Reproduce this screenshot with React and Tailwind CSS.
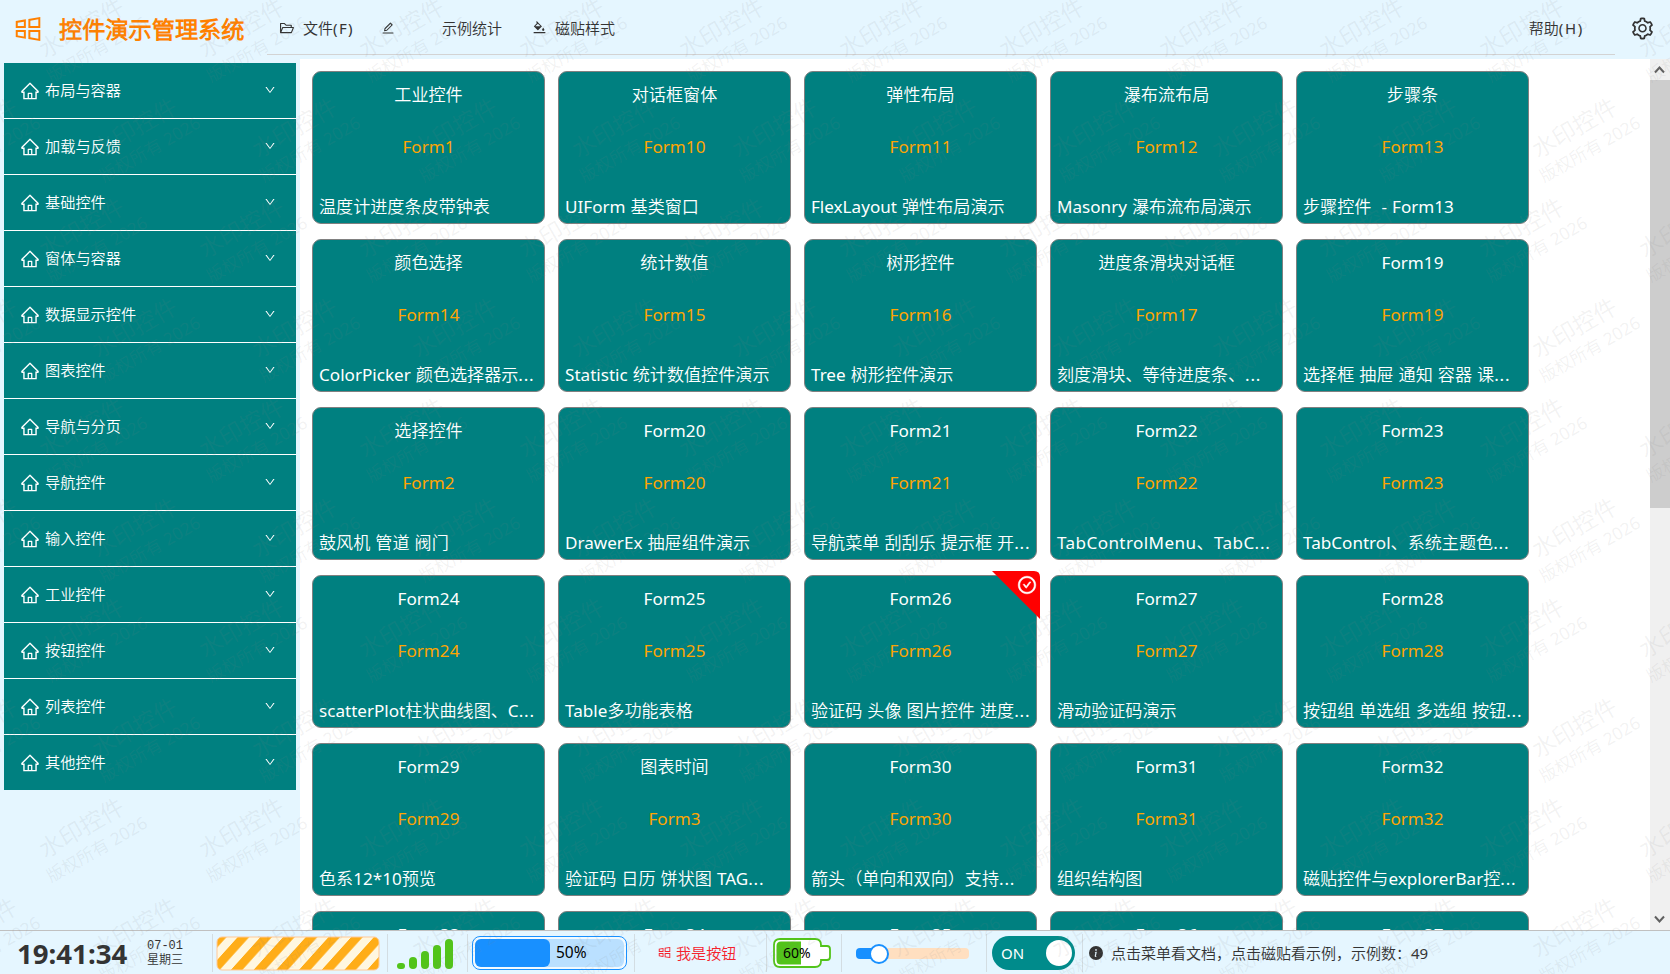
import {
  AiOutlineBgColors,
  AiOutlineCheckCircle,
  AiOutlineDown,
  AiOutlineEdit,
  AiOutlineFolderOpen,
  AiOutlineHome,
  AiOutlineSetting,
  AiOutlineWindows,
} from "react-icons/ai";
import { BsInfoCircleFill } from "react-icons/bs";

const MENU_ITEMS = [
  "布局与容器",
  "加载与反馈",
  "基础控件",
  "窗体与容器",
  "数据显示控件",
  "图表控件",
  "导航与分页",
  "导航控件",
  "输入控件",
  "工业控件",
  "按钮控件",
  "列表控件",
  "其他控件",
];

const TILES = [
  { title: "工业控件", form: "Form1", desc: "温度计进度条皮带钟表" },
  { title: "对话框窗体", form: "Form10", desc: "UIForm 基类窗口" },
  { title: "弹性布局", form: "Form11", desc: "FlexLayout 弹性布局演示" },
  { title: "瀑布流布局", form: "Form12", desc: "Masonry 瀑布流布局演示" },
  { title: "步骤条", form: "Form13", desc: "步骤控件  - Form13" },
  { title: "颜色选择", form: "Form14", desc: "ColorPicker 颜色选择器示..." },
  { title: "统计数值", form: "Form15", desc: "Statistic 统计数值控件演示" },
  { title: "树形控件", form: "Form16", desc: "Tree 树形控件演示" },
  { title: "进度条滑块对话框", form: "Form17", desc: "刻度滑块、等待进度条、..." },
  { title: "Form19", form: "Form19", desc: "选择框 抽屉 通知 容器 课..." },
  { title: "选择控件", form: "Form2", desc: "鼓风机 管道 阀门" },
  { title: "Form20", form: "Form20", desc: "DrawerEx 抽屉组件演示" },
  { title: "Form21", form: "Form21", desc: "导航菜单 刮刮乐 提示框 开..." },
  { title: "Form22", form: "Form22", desc: "TabControlMenu、TabC...", wide: true },
  { title: "Form23", form: "Form23", desc: "TabControl、系统主题色..." },
  { title: "Form24", form: "Form24", desc: "scatterPlot柱状曲线图、C..." },
  { title: "Form25", form: "Form25", desc: "Table多功能表格" },
  { title: "Form26", form: "Form26", desc: "验证码 头像 图片控件 进度...", checked: true },
  { title: "Form27", form: "Form27", desc: "滑动验证码演示" },
  { title: "Form28", form: "Form28", desc: "按钮组 单选组 多选组 按钮..." },
  { title: "Form29", form: "Form29", desc: "色系12*10预览" },
  { title: "图表时间", form: "Form3", desc: "验证码 日历 饼状图 TAG..." },
  { title: "Form30", form: "Form30", desc: "箭头（单向和双向）支持..." },
  { title: "Form31", form: "Form31", desc: "组织结构图" },
  { title: "Form32", form: "Form32", desc: "磁贴控件与explorerBar控..." },
  { title: "Form33", form: "Form33", desc: "" },
  { title: "Form34", form: "Form34", desc: "" },
  { title: "Form35", form: "Form35", desc: "" },
  { title: "Form36", form: "Form36", desc: "" },
  { title: "Form37", form: "Form37", desc: "" },
];

// --- Component: Top bar ---
const HeaderBar = () => (
  <header className="flex h-[59px] shrink-0 items-start text-[15px] leading-5 text-[#333333]">
    <div className="flex h-[58px] w-[267px] shrink-0 items-center pl-3 text-[#ff8000]">
      <AiOutlineWindows className="size-8" />
      <span className="ml-[15px] text-[23.2px] font-bold whitespace-nowrap">
        控件演示管理系统
      </span>
    </div>
    <nav className="flex h-[55px] w-[1348px] shrink-0 items-center border-b border-[#d3d3d3] pt-px pl-[12px] whitespace-nowrap">
      <span className="flex w-[102px] items-center gap-2">
        <AiOutlineFolderOpen className="size-4" />
        <span>
          文件<span className="tracking-[1.4px]">(F)</span>
        </span>
      </span>
      <span className="w-[61px]">
        <AiOutlineEdit className="size-[14px]" />
      </span>
      <span className="w-[90px]">示例统计</span>
      <span className="flex items-center gap-2">
        <AiOutlineBgColors className="size-[15px]" />
        磁贴样式
      </span>
      <span className="mr-[31px] ml-auto">
        帮助<span className="tracking-[1.7px]">(H)</span>
      </span>
    </nav>
    <AiOutlineSetting className="mt-4 ml-[15px] size-[25px]" />
  </header>
);

// --- Component: Left accordion menu ---
const SideMenu = () => (
  <aside className="w-[300px] shrink-0 pt-1 pl-1">
    <ul className="w-[292px] divide-y divide-white bg-[#008080] text-[15.2px] text-white">
      {MENU_ITEMS.map((item) => (
        <li key={item} className="box-content flex h-[55px] items-center">
          <AiOutlineHome className="ml-4 size-5" />
          <span className="mb-px ml-[5px]">{item}</span>
          <AiOutlineDown className="mr-5 mb-px ml-auto size-3" />
        </li>
      ))}
    </ul>
  </aside>
);

const Tile = ({ title, form, desc, wide, checked }) => (
  <div className="relative flex h-[153px] flex-col rounded-[9px] border border-[#808080] bg-[#008080] px-[6px] text-[17.1px] leading-6 whitespace-pre text-white">
    <div className="mt-[11px] text-center">{title}</div>
    <div className="mt-7 text-center text-[#ffa500]">{form}</div>
    <div className={wide ? "mt-9 tracking-[0.4px]" : "mt-9 [word-spacing:0.6px]"}>
      {desc.replace("...", "")}
      {desc.endsWith("...") && <span className="tracking-[0.8px]">...</span>}
    </div>
    {checked && (
      <div className="absolute -top-[5px] -right-[4px] size-[48px]">
        <svg viewBox="0 0 48 48" className="size-full">
          <path d="M0 0H42Q48 0 48 6V48Z" fill="#ff0000" />
        </svg>
        <AiOutlineCheckCircle className="absolute top-1 right-[3px] size-5 stroke-[30]" />
      </div>
    )}
  </div>
);

const ScrollBar = () => (
  <div className="flex w-5 shrink-0 flex-col items-center bg-[#f0f0f0]">
    <svg viewBox="0 0 20 21" className="h-[21px] w-5 shrink-0">
      <path d="M5 13.5l4.5-5 4.5 5" fill="none" stroke="#606060" strokeWidth="2" />
    </svg>
    <div className="h-[428px] w-5 bg-[#cdcdcd]" />
    <svg viewBox="0 0 20 21" className="mt-auto h-[21px] w-5 shrink-0">
      <path d="M5 7.5l4.5 5 4.5-5" fill="none" stroke="#606060" strokeWidth="2" />
    </svg>
  </div>
);

const Divider = () => <div className="h-[38px] w-px shrink-0 bg-[#d3dde2]" />;

// --- Component: Bottom status bar ---
const StatusBar = () => (
  <footer className="flex h-[44px] shrink-0 items-center border-t border-[#c0c0c0] bg-[#e5f6ff] pt-px whitespace-nowrap text-[#333333]">
    <div className="w-[147px] pl-[17px] text-[27.6px] leading-8 font-bold">
      19:41:34
    </div>
    <div className="w-[65px] text-[12px] leading-[14px]">
      <div className="font-['Liberation_Mono']">07-01</div>
      <div>星期三</div>
    </div>
    <Divider />
    <svg viewBox="0 0 164 35" className="ml-[3px] h-[35px] w-[164px] shrink-0">
      <defs>
        <pattern id="stripes" width="22.7" height="35" patternUnits="userSpaceOnUse" patternTransform="skewX(-42)">
          <rect width="22.7" height="35" fill="#fff7e0" />
          <rect width="11.5" height="35" fill="#ffad18" />
        </pattern>
      </defs>
      <rect x="1" y="1" width="162" height="33" rx="5" fill="url(#stripes)" stroke="#ffc998" />
    </svg>
    <div className="w-[7px]" />
    <Divider />
    <div className="flex w-[79px] items-end gap-1 pt-px pl-[9px]">
      <i className="h-[6px] w-2 rounded-sm bg-[#52c41a]" />
      <i className="h-3 w-2 rounded-sm bg-[#52c41a]" />
      <i className="h-[18px] w-2 rounded-sm bg-[#52c41a]" />
      <i className="h-6 w-2 rounded-sm bg-[#52c41a]" />
      <i className="h-[30px] w-2 rounded-sm bg-[#52c41a]" />
    </div>
    <Divider />
    <div className="ml-1 h-[34px] w-[155px] shrink-0 rounded-lg border border-[#1890ff] bg-[#f2faff] p-[2px]">
      <div className="flex h-full items-center rounded-md bg-[#bae0ff]">
        <div className="h-full w-[75px] rounded-md bg-[#1890ff]" />
        <span className="ml-[6px] text-[15.5px] text-black">50%</span>
      </div>
    </div>
    <div className="w-[7px]" />
    <Divider />
    <div className="flex w-[131px] items-center gap-1 pl-[22px] text-[15.1px] text-[#f5222d]">
      <AiOutlineWindows className="size-[15px]" />
      我是按钮
    </div>
    <Divider />
    <svg viewBox="0 0 60 32" className="ml-[6px] h-8 w-[60px] shrink-0">
      <path
        d="M7 2H42Q48 2 48 8V9H54Q57 9 57 12V20Q57 23 54 23H48V24Q48 30 42 30H7Q1 30 1 24V8Q1 2 7 2Z"
        fill="#ffffff"
        stroke="#52c41a"
        strokeWidth="1.8"
      />
      <path d="M8 4.5H28V27.5H8Q3.5 27.5 3.5 23V9Q3.5 4.5 8 4.5Z" fill="#52c41a" />
      <text x="10" y="21" fontSize="14" fill="#000000">60%</text>
    </svg>
    <div className="w-[8px]" />
    <Divider />
    <div className="flex w-[144px] items-center pt-px pl-[14px]">
      <div className="h-[11px] w-4 rounded-l-[4px] bg-[#1890ff]" />
      <div className="z-10 -mx-[3px] size-5 shrink-0 rounded-full border-2 border-[#1890ff] bg-white" />
      <div className="h-[11px] w-[83px] rounded-r-[4px] bg-[#ffdfc0]" />
    </div>
    <Divider />
    <div className="ml-[5px] flex h-[34px] w-[83px] shrink-0 items-center rounded-full bg-[#008b8b] pr-[3px] pl-[9px] text-[15px] text-white">
      ON
      <span className="ml-auto size-[26px] rounded-full bg-white" />
    </div>
    <div className="w-[7px]" />
    <Divider />
    <div className="ml-[6px] flex items-center gap-[8px] text-[15px]">
      <BsInfoCircleFill className="size-[14px]" />
      点击菜单看文档，点击磁贴看示例，示例数：49
    </div>
  </footer>
);

// Staggered marks, every other row is shifted to the right
const MARKS = Array.from({ length: 11 }, (_, row) =>
  Array.from({ length: 12 }, (_, col) => ({
    left: (row % 2 ? 86 : 33) + (col - 1) * 160,
    top: 38 + row * 100,
  })),
).flat();

const Watermark = () => (
  <div className="pointer-events-none absolute inset-0 z-20 overflow-hidden text-[#808080]/11">
    {MARKS.map((mark) => (
      <div
        key={`${mark.left}-${mark.top}`}
        className="absolute h-0 w-0 whitespace-nowrap"
        style={{ left: mark.left, top: mark.top }}
      >
        <div className="w-max origin-top-left -rotate-30">
          <div className="text-[23.5px] leading-[30px]">水印控件</div>
          <div className="-ml-[7px] text-[17.3px] leading-[24px]">版权所有 2026</div>
        </div>
      </div>
    ))}
  </div>
);

function App() {
  return (
    <div className="relative flex h-[974px] w-[1670px] flex-col overflow-hidden bg-[#e5f6ff] font-['Noto_Sans','Noto_Sans_CJK_SC_DemiLight','Noto_Sans_CJK_SC',sans-serif]">
      <HeaderBar />
      <div className="flex h-[871px] shrink-0">
        <SideMenu />
        <main className="flex flex-1 overflow-hidden bg-white">
          <div className="grid flex-1 grid-cols-[repeat(5,233px)] content-start gap-x-[13px] gap-y-[15px] overflow-hidden pt-3 pl-3">
            {TILES.map((tile) => (
              <Tile key={tile.form} {...tile} />
            ))}
          </div>
          <ScrollBar />
        </main>
      </div>
      <StatusBar />
      <Watermark />
    </div>
  );
}

export default App;
